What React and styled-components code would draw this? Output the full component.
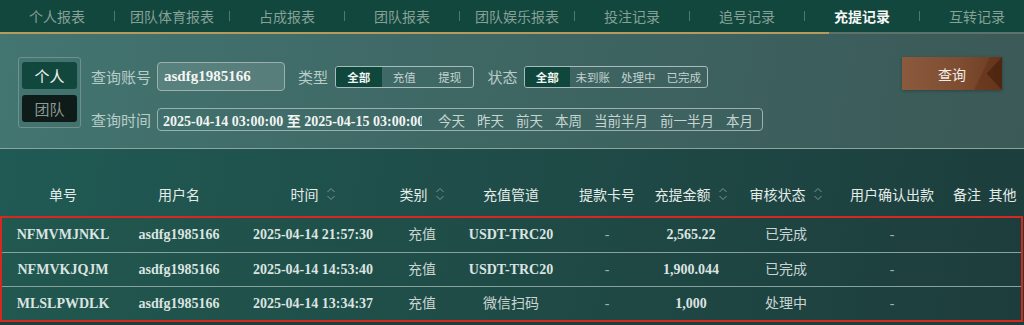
import styled, { createGlobalStyle } from "styled-components";

const GlobalStyle = createGlobalStyle`
body {
  margin: 0;
  background: #1d3f3c;
  font-family: "Liberation Sans", "Noto Sans CJK SC", sans-serif;
}
`

const Page = styled.div`
width: 1024px;
height: 325px;
overflow: hidden;
display: flex;
flex-direction: column;
`

const TabBar = styled.div`
height: 32px;
display: flex;
align-items: center;
background: #12473d;
border-bottom: 2px solid transparent;
border-image: linear-gradient(to right, #b79b5c 0, #b79b5c 828px, #5d716d 828px, #5d716d 100%) 1;
`
const Tab = styled.div`
width: 114px;
flex-shrink: 0;
text-align: center;
font-size: 14px;
color: ${p => (p.$active ? "#f4f7f5" : "#86a198")};
font-weight: ${p => (p.$active ? 700 : 400)};
`
const TabSep = styled.span`
width: 1px;
height: 10px;
flex-shrink: 0;
background: #4c7a6f;
`

const Filter = styled.div`
height: 115px;
box-sizing: border-box;
padding: 23px 22px 0 18px;
display: flex;
align-items: flex-start;
background: linear-gradient(100deg, #437571 0%, #3e6663 50%, #3b5957 100%);
border-bottom: 1px solid #8ba4a0;
`
const Toggle = styled.div`
width: 63px;
height: 71px;
box-sizing: border-box;
border: 1px solid #6f908c;
border-radius: 3px;
padding: 4px 3px;
display: flex;
flex-direction: column;
gap: 6px;
`
const ToggleBtn = styled.div`
height: 27px;
border-radius: 3px;
display: flex;
align-items: center;
justify-content: center;
font-size: 15px;
background: ${p => (p.$active ? "#11473d" : "#0f1b19")};
color: ${p => (p.$active ? "#eef3ee" : "#8a9a96")};
`
const Form = styled.div`
margin-left: 10px;
margin-top: 5px;
display: flex;
flex-direction: column;
gap: 17px;
`
const FormRow = styled.div`
display: flex;
align-items: center;
`
const Label = styled.span`
font-size: 15px;
color: #b8ccc8;
margin-left: ${p => p.$gap || 0}px;
margin-right: ${p => p.$after || 6}px;
white-space: nowrap;
`
const Account = styled.div`
width: 128px;
height: 29px;
box-sizing: border-box;
border: 1px solid #9bb1ae;
border-radius: 4px;
background: rgba(255, 255, 255, 0.12);
padding-left: 6px;
display: flex;
align-items: center;
font-family: "Liberation Serif", serif;
font-weight: 700;
font-size: 15px;
color: #f4f6f4;
`
const Segmented = styled.div`
display: flex;
height: 22px;
box-sizing: border-box;
border: 1px solid #a9bcb9;
border-radius: 3px;
overflow: hidden;
`
const Segment = styled.div`
width: 45.5px;
display: flex;
align-items: center;
justify-content: center;
font-size: 11.5px;
background: ${p => (p.$active ? "#10473d" : "transparent")};
color: ${p => (p.$active ? "#f1f5f2" : "#c3d2cf")};
font-weight: ${p => (p.$active ? 700 : 400)};
`
const DateBox = styled.div`
width: 606px;
height: 23px;
box-sizing: border-box;
border: 1px solid #9bb1ae;
border-radius: 4px;
padding-left: 5px;
display: flex;
align-items: center;
gap: 12px;
`
const DateText = styled.div`
width: 259px;
margin-right: 4px;
overflow: hidden;
white-space: nowrap;
font-family: "Liberation Serif", "Noto Sans CJK SC", serif;
font-weight: 700;
font-size: 14px;
color: #f2f5f3;
`
const Quick = styled.span`
font-size: 13.5px;
color: #c6d4d1;
white-space: nowrap;
`
const SearchBtn = styled.div`
margin-left: auto;
width: 100px;
height: 33px;
position: relative;
overflow: hidden;
display: flex;
align-items: center;
justify-content: center;
font-size: 14px;
color: #f3ece6;
background: linear-gradient(90deg, #8b5a3d 0%, #7e4c30 60%, #6c3a1f 100%);
box-shadow: 0 1px 3px rgba(0, 0, 0, 0.25);
&::after {
  content: "";
  position: absolute;
  right: 0;
  top: 0;
  width: 28px;
  height: 33px;
  background: #4a240f;
  clip-path: polygon(100% 0, 100% 100%, 45% 50%);
  opacity: 0.8;
}
&::before {
  content: "";
  position: absolute;
  right: 0;
  top: 0;
  width: 40px;
  height: 33px;
  background: #5d2f17;
  clip-path: polygon(100% 0, 70% 0, 30% 100%, 100% 100%);
  opacity: 0.45;
}
`

const cols = "122px 110px 158px 60px 118px 74px 94px 96px 116px 34px 1fr"

const Head = styled.div`
height: 67px;
box-sizing: border-box;
padding: 23px 3px 0 2px;
display: grid;
grid-template-columns: ${cols};
background: linear-gradient(100deg, #205a54 0%, #1f4c48 50%, #1c3e3d 100%);
`
const Th = styled.div`
display: flex;
justify-content: center;
align-items: center;
gap: 7px;
font-size: 14px;
color: #e4ece9;
white-space: nowrap;
`
const Body = styled.div`
margin-right: 1px;
border: 2px solid #d7281f;
background: linear-gradient(100deg, #21584f 0%, #1f4b47 50%, #1d3d3c 100%);
`
const Row = styled.div`
height: 34px;
box-sizing: border-box;
display: grid;
grid-template-columns: ${cols};
align-items: center;
& + & {
  border-top: 1px solid #86a29e;
}
`
const Td = styled.div`
text-align: center;
white-space: nowrap;
line-height: 16px;
font-size: 14px;
font-family: "Liberation Serif", "Noto Sans CJK SC", serif;
font-weight: ${p => (p.$bold ? 700 : 400)};
color: ${p => (p.$dim ? "#9fb3af" : p.$bold ? "#dbe4e1" : "#c9d5d2")};
`

function SortIcon() {
    return (
        <svg width="10" height="16" viewBox="0 0 10 16" fill="none" stroke="#7d9692" strokeWidth="1">
            <path d="M1.5 6 L5 2.5 L8.5 6" />
            <path d="M1.5 10 L5 13.5 L8.5 10" />
        </svg>
    )
}

const tabs = ["个人报表", "团队体育报表", "占成报表", "团队报表", "团队娱乐报表", "投注记录", "追号记录", "充提记录", "互转记录"]
const quick = ["今天", "昨天", "前天", "本周", "当前半月", "前一半月", "本月"]
const heads = [
    ["单号"], ["用户名"], ["时间", true], ["类别", true], ["充值管道"], ["提款卡号"],
    ["充提金额", true], ["审核状态", true], ["用户确认出款"], ["备注"], ["其他"],
]
const rows = [
    ["NFMVMJNKL", "2025-04-14 21:57:30", "USDT-TRC20", "2,565.22", "已完成"],
    ["NFMVKJQJM", "2025-04-14 14:53:40", "USDT-TRC20", "1,900.044", "已完成"],
    ["MLSLPWDLK", "2025-04-14 13:34:37", "微信扫码", "1,000", "处理中"],
]

export default function App() {
    return (
        <Page>
            <GlobalStyle />
            <TabBar>
                {tabs.map((t, i) => [
                    i > 0 && <TabSep key={"s" + i} />,
                    <Tab key={t} $active={t === "充提记录"}>{t}</Tab>,
                ])}
            </TabBar>
            <Filter>
                <Toggle>
                    <ToggleBtn $active>个人</ToggleBtn>
                    <ToggleBtn>团队</ToggleBtn>
                </Toggle>
                <Form>
                    <FormRow>
                        <Label>查询账号</Label>
                        <Account>asdfg1985166</Account>
                        <Label $gap={13} $after={7}>类型</Label>
                        <Segmented>
                            <Segment $active>全部</Segment>
                            <Segment>充值</Segment>
                            <Segment>提现</Segment>
                        </Segmented>
                        <Label $gap={14} $after={6}>状态</Label>
                        <Segmented>
                            <Segment $active>全部</Segment>
                            <Segment>未到账</Segment>
                            <Segment>处理中</Segment>
                            <Segment>已完成</Segment>
                        </Segmented>
                    </FormRow>
                    <FormRow>
                        <Label>查询时间</Label>
                        <DateBox>
                            <DateText>2025-04-14 03:00:00 至 2025-04-15 03:00:00</DateText>
                            {quick.map(q => <Quick key={q}>{q}</Quick>)}
                        </DateBox>
                    </FormRow>
                </Form>
                <SearchBtn>查询</SearchBtn>
            </Filter>
            <Head>
                {heads.map(([h, sort]) => (
                    <Th key={h}>{h}{sort && <SortIcon />}</Th>
                ))}
            </Head>
            <Body>
                {rows.map(r => (
                    <Row key={r[0]}>
                        <Td $bold>{r[0]}</Td>
                        <Td $bold>asdfg1985166</Td>
                        <Td $bold>{r[1]}</Td>
                        <Td>充值</Td>
                        <Td $bold={r[2].startsWith("USDT")}>{r[2]}</Td>
                        <Td $dim>-</Td>
                        <Td $bold>{r[3]}</Td>
                        <Td>{r[4]}</Td>
                        <Td $dim>-</Td>
                        <Td />
                        <Td />
                    </Row>
                ))}
            </Body>
        </Page>
    )
}
